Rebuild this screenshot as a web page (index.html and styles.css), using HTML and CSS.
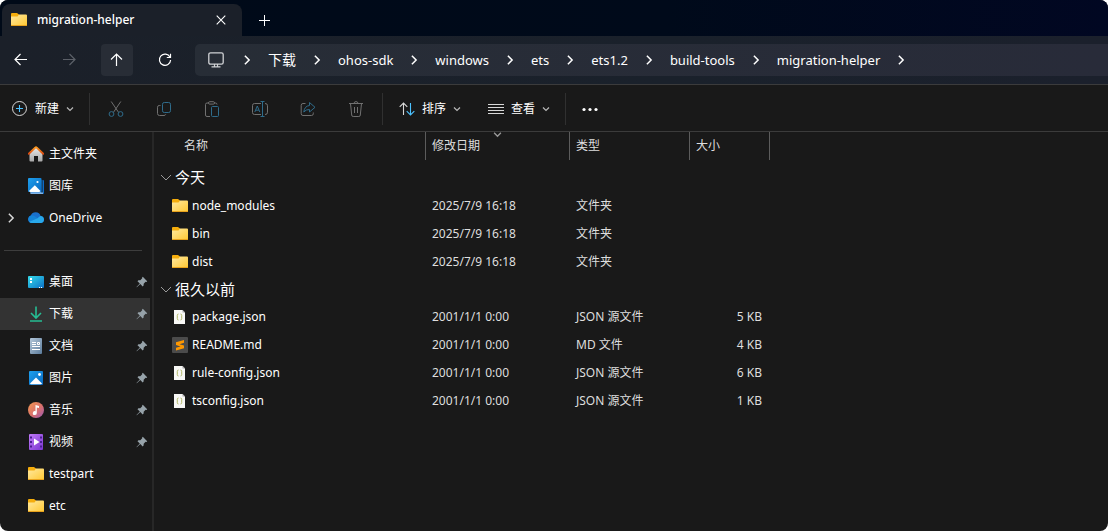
FILE: index.html
```html
<!DOCTYPE html>
<html lang="zh-CN">
<head>
<meta charset="utf-8">
<title>migration-helper</title>
<link rel="stylesheet" href="styles.css">
</head>
<body>
<svg class="defs" width="0" height="0" aria-hidden="true">
  <defs>
    <linearGradient id="g-folder" x1="0" y1="0" x2="1" y2="1"><stop offset="0" stop-color="#ffe9a0"/><stop offset="1" stop-color="#ffc832"/></linearGradient>
    <linearGradient id="g-home" x1="0" y1="0" x2="0" y2="1"><stop offset="0" stop-color="#e8e8e8"/><stop offset="1" stop-color="#a8a8a8"/></linearGradient>
    <linearGradient id="g-roof" x1="0" y1="0" x2="0" y2="1"><stop offset="0" stop-color="#ff9a1f"/><stop offset="1" stop-color="#d9480f"/></linearGradient>
    <linearGradient id="g-blue" x1="0" y1="0" x2="1" y2="1"><stop offset="0" stop-color="#1ea0ee"/><stop offset="1" stop-color="#0868c0"/></linearGradient>
    <linearGradient id="g-desk" x1="0" y1="0" x2="1" y2="1"><stop offset="0" stop-color="#35dcea"/><stop offset="1" stop-color="#0c70c8"/></linearGradient>
    <linearGradient id="g-doc" x1="0" y1="0" x2="1" y2="1"><stop offset="0" stop-color="#b4c8da"/><stop offset="1" stop-color="#5c7c9c"/></linearGradient>
    <linearGradient id="g-music" x1="0" y1="0" x2="1" y2="1"><stop offset="0" stop-color="#f59a50"/><stop offset=".55" stop-color="#d9706c"/><stop offset="1" stop-color="#9a58b8"/></linearGradient>
    <linearGradient id="g-video" x1="0" y1="0" x2="1" y2="1"><stop offset="0" stop-color="#c07af8"/><stop offset="1" stop-color="#7a35d0"/></linearGradient>
    <symbol id="folder" viewBox="0 0 16 16"><path d="M0 2A1 1 0 0 1 1 1H6L8 2.5V6H0Z" fill="#f5ad0c"/><path d="M0 4.6H6.5L8 2.5H15A1 1 0 0 1 16 3.5V13A1 1 0 0 1 15 14H1A1 1 0 0 1 0 13Z" fill="url(#g-folder)"/><path d="M0 12.4A1 1 0 0 0 1 14H15A1 1 0 0 0 16 12.4Q15.6 13.1 15 13.1H1Q.4 13.1 0 12.4Z" fill="#e8a21c"/></symbol>
    <symbol id="right" viewBox="0 0 8 8"><path d="M2.3.6 5.7 4 2.3 7.4" fill="none" stroke="currentColor" stroke-width="1.2"/></symbol>
    <symbol id="down" viewBox="0 0 8 8"><path d="M1 2.5 4 5.5 7 2.5" fill="none" stroke="currentColor" stroke-width="1.2"/></symbol>
    <symbol id="pin" viewBox="0 0 12 12"><path d="M6.8 .8 11.2 5.2 10.5 5.9 9.6 5.8 7.7 7.7 7.6 9.6 6.7 10.5 4.3 8.1 .8 11.3 .5 11 3.8 7.6 1.5 5.2 2.4 4.3 4.3 4.2 6.2 2.3 6.1 1.5Z" fill="#97a3aa"/></symbol>
    <symbol id="json" viewBox="0 0 16 16"><path d="M2 1H10.5L13 3.5V15H2Z" fill="#f8f8f6"/><path d="M10.5 1V3.5H13Z" fill="#aaa"/><path d="M6.5 5Q5.3 5 5.3 6.3V9.7Q5.3 11 6.5 11M8.5 5Q9.7 5 9.7 6.3V9.7Q9.7 11 8.5 11" fill="none" stroke="#b3b96a"/></symbol>
  </defs>
</svg>
<div class="window">
  <header class="tabs">
    <div class="tab">
      <svg class="ic" viewBox="0 0 16 16"><use href="#folder"/></svg>
      <span class="tab-title">migration-helper</span>
      <button class="icon-btn tab-close" aria-label="关闭"><svg class="s10" viewBox="0 0 10 10"><path d="M.7.7 9.3 9.3M9.3.7.7 9.3" fill="none" stroke="currentColor" stroke-width="1.1"/></svg></button>
    </div>
    <button class="icon-btn tab-new" aria-label="新标签页"><svg class="s12" viewBox="0 0 12 12"><path d="M6.5 1V12M1 6.5H12" stroke="currentColor"/></svg></button>
  </header>

  <nav class="navbar" aria-label="导航">
    <button class="icon-btn" aria-label="后退"><svg class="ic" viewBox="0 0 16 16"><path d="M14 7.5H2M7.5 2 2 7.5 7.5 13" fill="none" stroke="currentColor" stroke-width="1.2"/></svg></button>
    <button class="icon-btn" aria-label="前进" disabled><svg class="ic" viewBox="0 0 16 16"><path d="M2 7.5H14M8.5 2 14 7.5 8.5 13" fill="none" stroke="currentColor" stroke-width="1.2"/></svg></button>
    <button class="icon-btn hover" aria-label="上移"><svg class="ic" viewBox="0 0 16 16"><path d="M7.5 14V2M2 7.5 7.5 2 13 7.5" fill="none" stroke="currentColor" stroke-width="1.2"/></svg></button>
    <button class="icon-btn" aria-label="刷新"><svg class="ic" viewBox="0 0 16 16"><path d="M13 5.2A5.6 5.6 0 1 0 13.6 8M13.5 1.8V5.5H9.8" fill="none" stroke="currentColor" stroke-width="1.2"/></svg></button>
    <div class="address">
      <svg class="ic pc" viewBox="0 0 16 16"><rect x=".8" y=".8" width="14.4" height="11.4" rx="1.8" fill="none" stroke="currentColor" stroke-width="1.3"/><path d="M6.5 12V14.5M9.5 12V14.5M3.5 14.8H12.5" stroke="currentColor" stroke-width="1.2"/></svg>
      <svg class="sep" viewBox="0 0 8 8"><use href="#right"/></svg>
      <a class="crumb han" href="#">下载</a><svg class="sep" viewBox="0 0 8 8"><use href="#right"/></svg>
      <a class="crumb" href="#">ohos-sdk</a><svg class="sep" viewBox="0 0 8 8"><use href="#right"/></svg>
      <a class="crumb" href="#">windows</a><svg class="sep" viewBox="0 0 8 8"><use href="#right"/></svg>
      <a class="crumb" href="#">ets</a><svg class="sep" viewBox="0 0 8 8"><use href="#right"/></svg>
      <a class="crumb" href="#">ets1.2</a><svg class="sep" viewBox="0 0 8 8"><use href="#right"/></svg>
      <a class="crumb" href="#">build-tools</a><svg class="sep" viewBox="0 0 8 8"><use href="#right"/></svg>
      <a class="crumb" href="#">migration-helper</a><svg class="sep" viewBox="0 0 8 8"><use href="#right"/></svg>
    </div>
  </nav>

  <div class="toolbar" role="toolbar" aria-label="命令">
    <div class="group first">
      <button class="text-btn"><svg class="ic" viewBox="0 0 16 16"><circle cx="7.5" cy="7.5" r="7" fill="none" stroke="#d8d8d8"/><path d="M7.5 4V11M4 7.5H11" stroke="#4cc2ff" stroke-width="1.1"/></svg>新建<svg class="s8" viewBox="0 0 8 8"><use href="#down"/></svg></button>
    </div>
    <div class="group icons">
      <button class="icon-btn" aria-label="剪切"><svg class="ic" viewBox="0 0 16 16" fill="none"><path class="dim" d="M3.2.5 10.6 11.4M12.8.5 5.4 11.4"/><g class="tint"><circle cx="3.5" cy="13" r="2.4"/><circle cx="12.5" cy="13" r="2.4"/></g></svg></button>
      <button class="icon-btn" aria-label="复制"><svg class="ic" viewBox="0 0 16 16" fill="none"><rect class="tint" x="6.5" y="1.5" width="8" height="10" rx="1.8"/><path class="dim" d="M4.5 4.5H3.2A1.7 1.7 0 0 0 1.5 6.2V12.5A2 2 0 0 0 3.5 14.5H8A2 2 0 0 0 9.8 13.3"/></svg></button>
      <button class="icon-btn" aria-label="粘贴"><svg class="ic" viewBox="0 0 16 16" fill="none"><path class="dim" d="M5 2H3A1.5 1.5 0 0 0 1.5 3.5V14A1.5 1.5 0 0 0 3 15.5H6M10 2H11.5A1.5 1.5 0 0 1 13 3.5"/><rect class="dim" x="4.5" y=".7" width="6" height="2.4" rx="1.2"/><rect class="tint" x="7.5" y="5.5" width="7" height="10" rx="1"/></svg></button>
      <button class="icon-btn" aria-label="重命名"><svg class="ic" viewBox="0 0 16 16" fill="none"><path class="dim" d="M9 2.5H2.5A2 2 0 0 0 .5 4.5V11.5A2 2 0 0 0 2.5 13.5H9M13 2.5A2.3 2.3 0 0 1 15.5 4.8V11.2A2.3 2.3 0 0 1 13 13.5"/><path class="tint" d="M10.5 .5V15.5M8.5 .5H12.5M8.5 15.5H12.5M2.8 11 5.3 5 7.8 11M3.8 9.2H6.8"/></svg></button>
      <button class="icon-btn" aria-label="共享"><svg class="ic" viewBox="0 0 16 16" fill="none"><path class="dim" d="M5.5 2.5H3A1.8 1.8 0 0 0 1.2 4.3V12.7A1.8 1.8 0 0 0 3 14.5H11.5A1.8 1.8 0 0 0 13.3 12.7V11.5"/><path class="tint" d="M9.5 1.5 15 6.3 9.5 11V8.5Q6 8.3 3.8 11Q4.5 5 9.5 4.5Z"/></svg></button>
      <button class="icon-btn" aria-label="删除"><svg class="ic" viewBox="0 0 16 16" fill="none"><path class="dim" d="M1 2.5H15M6 2.5Q6 .6 8 .6Q10 .6 10 2.5M2.5 2.5 3.7 14A1.5 1.5 0 0 0 5.2 15.5H10.8A1.5 1.5 0 0 0 12.3 14L13.5 2.5M6.5 6V12M9.5 6V12"/></svg></button>
    </div>
    <div class="group views">
      <button class="text-btn"><svg class="ic" viewBox="0 0 16 16" fill="none"><path d="M4.5 14V2M.7 5.8 4.5 2 8.3 5.8" stroke="#d8d8d8" stroke-width="1.1"/><path d="M11.5 2V14M7.7 10.2 11.5 14 15.3 10.2" stroke="#4cc2ff" stroke-width="1.1"/></svg>排序<svg class="s8" viewBox="0 0 8 8"><use href="#down"/></svg></button>
      <button class="text-btn"><svg class="ic" viewBox="0 0 16 16"><path d="M0 3.5H16M0 6.5H16M0 9.5H16M0 12.5H16" stroke="#d8d8d8"/></svg>查看<svg class="s8" viewBox="0 0 8 8"><use href="#down"/></svg></button>
    </div>
    <button class="icon-btn more" aria-label="更多"><svg class="ic" viewBox="0 0 16 16" fill="currentColor"><circle cx="2" cy="8.5" r="1.6"/><circle cx="8" cy="8.5" r="1.6"/><circle cx="14" cy="8.5" r="1.6"/></svg></button>
  </div>

  <div class="content">
    <nav class="sidebar" aria-label="导航窗格">
      <a class="item" href="#"><svg class="s10 tw" viewBox="0 0 8 8"></svg><svg class="ic" viewBox="0 0 16 16"><path d="M1.5 7 8 1.5 14.5 7V14.5A1 1 0 0 1 13.5 15.5H10V10H6V15.5H2.5A1 1 0 0 1 1.5 14.5Z" fill="url(#g-home)"/><path d="M.8 7.8 7.2 1.6A1.2 1.2 0 0 1 8.8 1.6L15.2 7.8" fill="none" stroke="url(#g-roof)" stroke-width="1.9" stroke-linecap="round"/></svg>主文件夹</a>
      <a class="item" href="#"><svg class="s10 tw" viewBox="0 0 8 8"></svg><svg class="ic" viewBox="0 0 16 16"><path d="M3 2H15A1 1 0 0 1 16 3V15A1 1 0 0 1 15 16H3Z" fill="#0d6cc8"/><path d="M2 14.2H15V16H3Q2 16 2 14.2Z" fill="#7fb4e8"/><path d="M14 2V14.5" stroke="#1a1a1a"/><rect width="13.5" height="14" rx="1" fill="url(#g-blue)"/><path d="M1 13 6.8 7.2 12.5 13Q12 14 11 14H2.5Q1.5 14 1 13Z" fill="#fff"/><circle cx="9.5" cy="4" r="1.1" fill="#fff"/></svg>图库</a>
      <a class="item" href="#"><svg class="s10 tw" viewBox="0 0 8 8"><use href="#right"/></svg><svg class="ic" viewBox="0 0 16 16"><path d="M3.8 13A3.8 3.8 0 0 1 2.8 5.6A5.2 5.2 0 0 1 12.6 6A3.6 3.6 0 0 1 13.5 13Z" fill="#1a70cc"/><path d="M2.8 5.6A3.9 3.9 0 0 0 1.2 11.8L9.5 8.2 6 5.8Q4.5 5.2 2.8 5.6Z" fill="#1484d8"/><path d="M1.2 11.8 9.5 8.2 12.2 6Q16 6.2 16 9.8Q15.6 13 12.5 13H3.8Q2 13 1.2 11.8Z" fill="#28a8ea"/></svg>OneDrive</a>
      <div class="divider"><hr></div>
      <a class="item" href="#"><svg class="s10 tw" viewBox="0 0 8 8"></svg><svg class="ic" viewBox="0 0 16 16"><rect y="2" width="16" height="12" rx="1" fill="url(#g-desk)"/><path d="M2 4H4V6H2ZM2 7H4V9H2ZM11 13H12V14H11ZM13 13H14V14H13Z" fill="#fff"/></svg>桌面<svg class="pin" viewBox="0 0 12 12"><use href="#pin"/></svg></a>
      <a class="item active" href="#"><svg class="s10 tw" viewBox="0 0 8 8"></svg><svg class="ic" viewBox="0 0 16 16"><path d="M8 .5V11.5M3 7 8 12 13 7M2 15H14" fill="none" stroke="#26bd93" stroke-width="1.6"/></svg>下载<svg class="pin" viewBox="0 0 12 12"><use href="#pin"/></svg></a>
      <a class="item" href="#"><svg class="s10 tw" viewBox="0 0 8 8"></svg><svg class="ic" viewBox="0 0 16 16"><rect x="2" width="12" height="16" rx="1" fill="url(#g-doc)"/><path d="M4 4.5H8M4 6.5H8M4 8.5H12M4 11.5H12M9.5 4.5H11.5V6.5H9.5Z" fill="none" stroke="#fff"/></svg>文档<svg class="pin" viewBox="0 0 12 12"><use href="#pin"/></svg></a>
      <a class="item" href="#"><svg class="s10 tw" viewBox="0 0 8 8"></svg><svg class="ic" viewBox="0 0 16 16"><rect x="1" y="1" width="14" height="14" rx="1" fill="url(#g-blue)"/><path d="M2 13.6 8 7.6 14 13.6Q13.5 14.2 13 14.2H3Q2.5 14.2 2 13.6Z" fill="#fff"/><circle cx="11.5" cy="4.5" r="1.4" fill="#fff"/></svg>图片<svg class="pin" viewBox="0 0 12 12"><use href="#pin"/></svg></a>
      <a class="item" href="#"><svg class="s10 tw" viewBox="0 0 8 8"></svg><svg class="ic" viewBox="0 0 16 16"><circle cx="8" cy="8" r="8" fill="url(#g-music)"/><path d="M7.5 3 11 4V6L8.8 5.5V11A2 2 0 1 1 7.5 9.2Z" fill="#fff"/></svg>音乐<svg class="pin" viewBox="0 0 12 12"><use href="#pin"/></svg></a>
      <a class="item" href="#"><svg class="s10 tw" viewBox="0 0 8 8"></svg><svg class="ic" viewBox="0 0 16 16"><rect x="1" width="14" height="16" rx="1" fill="url(#g-video)"/><path d="M2 2.5H4V4.5H2ZM2 7H4V9H2ZM2 11.5H4V13.5H2ZM12 2.5H14V4.5H12ZM12 7H14V9H12ZM12 11.5H14V13.5H12Z" fill="#4a2090"/><path d="M6 4.5 11.5 8 6 11.5Z" fill="#fff"/></svg>视频<svg class="pin" viewBox="0 0 12 12"><use href="#pin"/></svg></a>
      <a class="item" href="#"><svg class="s10 tw" viewBox="0 0 8 8"></svg><svg class="ic" viewBox="0 0 16 16"><use href="#folder"/></svg>testpart</a>
      <a class="item" href="#"><svg class="s10 tw" viewBox="0 0 8 8"></svg><svg class="ic" viewBox="0 0 16 16"><use href="#folder"/></svg>etc</a>
    </nav>

    <main class="files">
      <table>
        <colgroup><col class="c-name"><col class="c-date"><col class="c-type"><col class="c-size"><col></colgroup>
        <thead>
          <tr><th class="h-name">名称</th><th>修改日期<svg class="sort" viewBox="0 0 8 8"><use href="#down"/></svg></th><th>类型</th><th>大小</th><td></td></tr>
        </thead>
        <tbody>
          <tr class="section spaced"><th colspan="5"><span class="label"><svg class="s12" viewBox="0 0 12 12"><path d="M1 4 6 9 11 4" fill="none" stroke="#999"/></svg>今天</span></th></tr>
          <tr><td class="name"><span class="label"><svg class="ic" viewBox="0 0 16 16"><use href="#folder"/></svg>node_modules</span></td><td>2025/7/9 16:18</td><td>文件夹</td><td></td><td></td></tr>
          <tr><td class="name"><span class="label"><svg class="ic" viewBox="0 0 16 16"><use href="#folder"/></svg>bin</span></td><td>2025/7/9 16:18</td><td>文件夹</td><td></td><td></td></tr>
          <tr><td class="name"><span class="label"><svg class="ic" viewBox="0 0 16 16"><use href="#folder"/></svg>dist</span></td><td>2025/7/9 16:18</td><td>文件夹</td><td></td><td></td></tr>
        </tbody>
        <tbody>
          <tr class="section"><th colspan="5"><span class="label"><svg class="s12" viewBox="0 0 12 12"><path d="M1 4 6 9 11 4" fill="none" stroke="#999"/></svg>很久以前</span></th></tr>
          <tr><td class="name"><span class="label"><svg class="ic" viewBox="0 0 16 16"><use href="#json"/></svg>package.json</span></td><td>2001/1/1 0:00</td><td>JSON 源文件</td><td class="size">5 KB</td><td></td></tr>
          <tr><td class="name"><span class="label"><svg class="ic" viewBox="0 0 16 16"><rect width="16" height="16" rx="1" fill="#4b4b4b"/><path d="M12 3V5.8L7.5 7.2 12 8.6V11.3L4 13.5V10.8L8.5 9.4 4 8V5.2Z" fill="#ff9800"/></svg>README.md</span></td><td>2001/1/1 0:00</td><td>MD 文件</td><td class="size">4 KB</td><td></td></tr>
          <tr><td class="name"><span class="label"><svg class="ic" viewBox="0 0 16 16"><use href="#json"/></svg>rule-config.json</span></td><td>2001/1/1 0:00</td><td>JSON 源文件</td><td class="size">6 KB</td><td></td></tr>
          <tr><td class="name"><span class="label"><svg class="ic" viewBox="0 0 16 16"><use href="#json"/></svg>tsconfig.json</span></td><td>2001/1/1 0:00</td><td>JSON 源文件</td><td class="size">1 KB</td><td></td></tr>
        </tbody>
      </table>
    </main>
  </div>
</div>
</body>
</html>
```
FILE: styles.css
```css
* { box-sizing: border-box; }
body {
  margin: 0;
  background: #fff;
  color: #fff;
  font: 12px/16px "Noto Sans", "Noto Sans CJK SC", sans-serif;
}
a { color: inherit; text-decoration: none; }
svg { flex: none; display: block; }
.defs { position: absolute; }
.ic { width: 16px; height: 16px; }
.s8 { width: 8px; height: 8px; }
.s10 { width: 10px; height: 10px; }
.s12 { width: 12px; height: 12px; }
.dim { stroke: #707070; }
.tint { stroke: #2f6c8b; }
button {
  display: flex;
  align-items: center;
  padding: 0;
  border: 0;
  background: none;
  color: inherit;
  font: inherit;
}
.icon-btn {
  flex: none;
  justify-content: center;
  width: 32px;
  height: 32px;
  border-radius: 4px;
}
.icon-btn:disabled { color: #5c6068; }
.icon-btn.hover { background: #282d36; }

.window {
  display: flex;
  flex-direction: column;
  min-height: 100vh;
  overflow: hidden;
  border-radius: 8px;
  background: #191919;
}

.tabs {
  display: flex;
  align-items: center;
  height: 36px;
  padding: 4px 2px 0;
  background: linear-gradient(90deg, #000a18, #000a1a 60%, #010722);
}
.tab {
  display: flex;
  align-items: center;
  gap: 10px;
  width: 240px;
  height: 32px;
  padding: 0 5px 0 9px;
  border-radius: 8px 8px 0 0;
  background: #1b2029;
}
.tab-title { flex: 1; font-weight: 500; }
.tab-new { margin-left: 6px; }

.navbar {
  display: flex;
  align-items: center;
  gap: 16px;
  height: 49px;
  padding-left: 5px;
  border-bottom: 1px solid #3b3b3c;
  background: linear-gradient(90deg, #1b2029, #1a212b 60%, #1b202c);
}
.address {
  display: flex;
  flex: 1;
  align-items: center;
  gap: 16px;
  height: 32px;
  margin-left: -2px;
  padding-left: 13px;
  border-radius: 5px 0 0 5px;
  background: linear-gradient(90deg, #272d36, #282b39);
  font-size: 13px;
}
.han { font-size: 14px; }
.pc { margin-right: 2px; color: #d0d2d5; }
.sep { width: 10px; height: 10px; }

.toolbar {
  display: flex;
  align-items: center;
  height: 47px;
  padding-top: 2px;
  border-bottom: 1px solid #3b3b3b;
}
.group {
  display: flex;
  align-items: center;
  height: 32px;
  border-right: 1px solid #303030;
}
.first { padding: 0 15px 0 12px; }
.icons { gap: 16px; padding: 0 10px; }
.views { gap: 27px; padding: 0 15px 0 16px; }
.text-btn { gap: 7px; height: 32px; }
.text-btn .s8 { color: #b8b8b8; }
.more { margin-left: 8px; }

.content { display: flex; flex: 1; }
.sidebar {
  width: 154px;
  padding: 6px 2px 8px 0;
  border-right: 2px solid #272727;
}
.item {
  display: flex;
  align-items: center;
  gap: 5px;
  height: 32px;
  padding: 0 2px 0 6px;
}
.item .ic { margin-left: 7px; }
.item.active { background: #333; }
.tw { color: #d8d8d8; }
.pin { width: 12px; height: 12px; margin-left: auto; }
.divider { display: flex; align-items: center; height: 32px; padding: 0 8px 0 4px; }
.divider hr { flex: 1; margin: 0; border: 0; border-top: 1px solid #3d3d3d; }

.files { flex: 1; min-width: 0; }
table { width: 100%; table-layout: fixed; border-collapse: separate; border-spacing: 0; }
.c-name { width: 272px; }
.c-date { width: 144px; }
.c-type { width: 120px; }
.c-size { width: 80px; }
th, td {
  height: 28px;
  padding: 0 6px;
  text-align: left;
  font-weight: 400;
  white-space: nowrap;
  color: #dedede;
}
thead th { position: relative; height: 27px; border-right: 1px solid #5c5c5c; }
thead .h-name { padding-left: 30px; }
.sort { position: absolute; top: -2px; left: 50%; width: 9px; height: 9px; margin-left: -5px; color: #999; }
.section th { height: 27px; padding-bottom: 2px; font-size: 15px; color: #fff; }
.section .label { gap: 3px; }
.spaced th { height: 32px; padding-top: 4px; }
.label { display: flex; align-items: center; gap: 4px; }
.name { padding-left: 18px; color: #fff; }
.size { padding-right: 8px; text-align: right; }
```
